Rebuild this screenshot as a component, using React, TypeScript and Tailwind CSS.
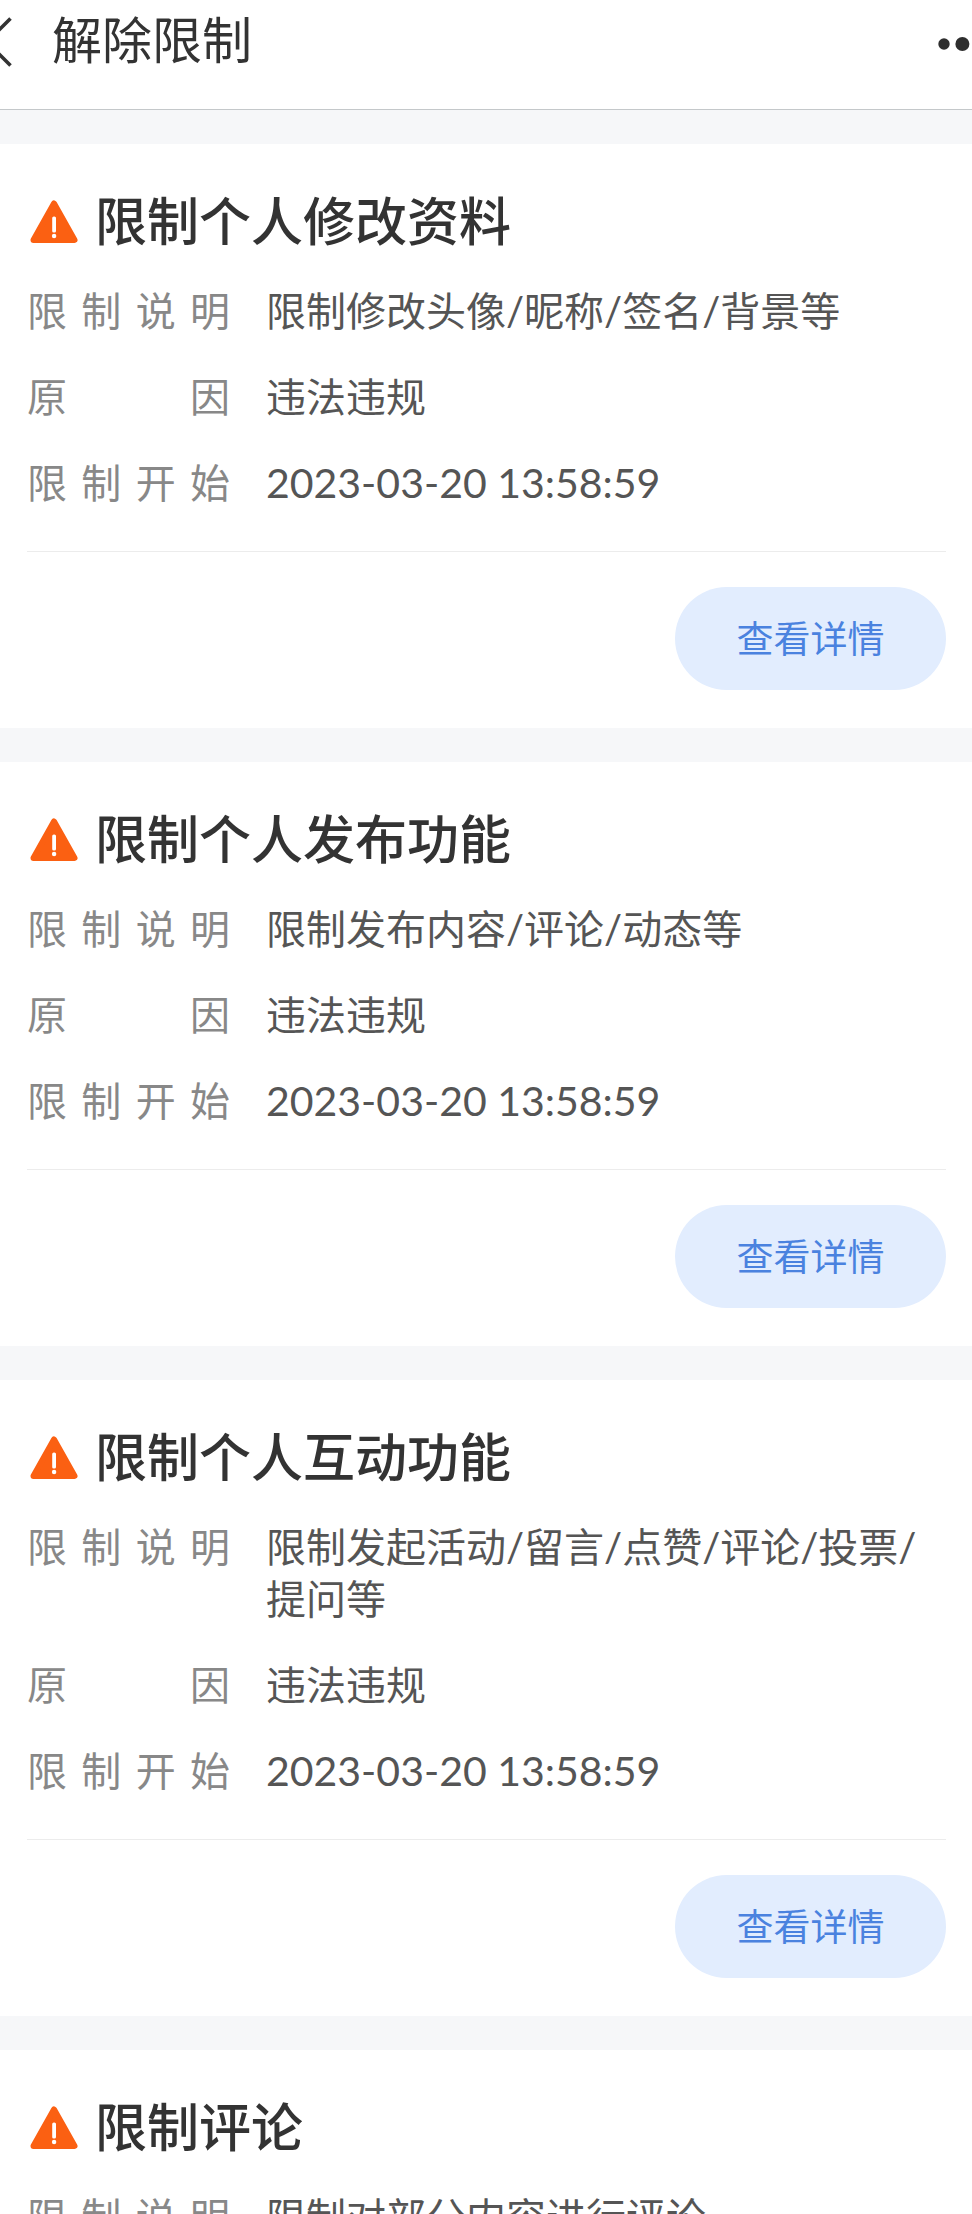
type Restriction = {
    title: string;
    description: string;
    reason: string;
    startedAt: string;
};

const restrictions: Restriction[] = [
    {
        title: "限制个人修改资料",
        description: "限制修改头像/昵称/签名/背景等",
        reason: "违法违规",
        startedAt: "2023-03-20 13:58:59",
    },
    {
        title: "限制个人发布功能",
        description: "限制发布内容/评论/动态等",
        reason: "违法违规",
        startedAt: "2023-03-20 13:58:59",
    },
    {
        title: "限制个人互动功能",
        description: "限制发起活动/留言/点赞/评论/投票/提问等",
        reason: "违法违规",
        startedAt: "2023-03-20 13:58:59",
    },
    {
        title: "限制评论",
        description: "限制对部分内容进行评论",
        reason: "违法违规",
        startedAt: "2023-03-20 13:58:59",
    },
];

function WarningIcon() {
    return (
        <svg viewBox="0 0 56 56" className="w-14 h-14 shrink-0" aria-hidden="true">
            <path
                d="M27 10.5 L47.5 47 H6.5 Z"
                fill="#fb6012"
                stroke="#fb6012"
                strokeWidth="6"
                strokeLinejoin="round"
            />
            <rect x="25.2" y="23.5" width="3.8" height="16" rx="1.6" fill="#fff" />
            <circle cx="27.1" cy="43" r="2.2" fill="#fff" />
        </svg>
    );
}

function Header() {
    return (
        <header className="flex items-start justify-between h-[110px] shrink-0 border-b border-[#c4c8ca] bg-white overflow-hidden">
            <div className="flex items-center h-20">
                <button type="button" aria-label="返回" className="-ml-[18px] shrink-0">
                    <svg viewBox="0 0 32 56" className="w-8 h-14" fill="none" stroke="#333" strokeWidth="3.6">
                        <path d="M28.5 6.5 L5 30 L28.5 53.5" />
                    </svg>
                </button>
                <h1 className="ml-[38px] text-[50px] leading-[70px] text-[#333]">解除限制</h1>
            </div>
            <button type="button" aria-label="更多" className="flex items-center h-[87px] -mr-4 shrink-0">
                <svg viewBox="0 0 52 20" className="w-[52px] h-5" fill="#2e2e2e">
                    <circle cx="8" cy="10" r="5.7" />
                    <circle cx="26.4" cy="10" r="7" />
                    <circle cx="45" cy="10" r="5.7" />
                </svg>
            </button>
        </header>
    );
}

function Row({ label, children }: { label: string; children: React.ReactNode }) {
    return (
        <div className="flex items-start">
            <dt className="flex justify-between w-[203px] shrink-0 text-[#888]">
                {label.split("").map((char) => (
                    <span key={char}>{char}</span>
                ))}
            </dt>
            <dd className="ml-9 flex-1 text-[#555]">{children}</dd>
        </div>
    );
}

function RestrictionCard({ item }: { item: Restriction }) {
    return (
        <section className="bg-white pl-[27px] pr-[26px] pt-[42px] pb-[38px]">
            <div className="flex items-center gap-3">
                <WarningIcon />
                <h2 className="text-[52px] leading-[70px] font-medium text-[#333]">{item.title}</h2>
            </div>

            <dl className="mt-[29px] flex flex-col gap-[34px] text-[40px] leading-[52px]">
                <Row label="限制说明">{item.description}</Row>
                <Row label="原因">{item.reason}</Row>
                <Row label="限制开始">
                    <time className="text-[41px]">{item.startedAt}</time>
                </Row>
            </dl>

            <div className="mt-[42px] pt-[35px] border-t border-[#ececec] flex justify-end">
                <button
                    type="button"
                    className="w-[271px] h-[103px] rounded-full bg-[#e2edfe] text-[37px] text-[#4a82df]"
                >
                    查看详情
                </button>
            </div>
        </section>
    );
}

export default function App() {
    return (
        <div className="h-screen flex flex-col bg-[#f6f7f9] font-['Lato','Noto_Sans_CJK_SC',sans-serif]">
            <Header />
            <main className="flex-1 min-h-0 overflow-y-auto [scrollbar-width:none] pt-[34px] space-y-[34px]">
                {restrictions.map((item) => (
                    <RestrictionCard key={item.title} item={item} />
                ))}
            </main>
        </div>
    );
}
